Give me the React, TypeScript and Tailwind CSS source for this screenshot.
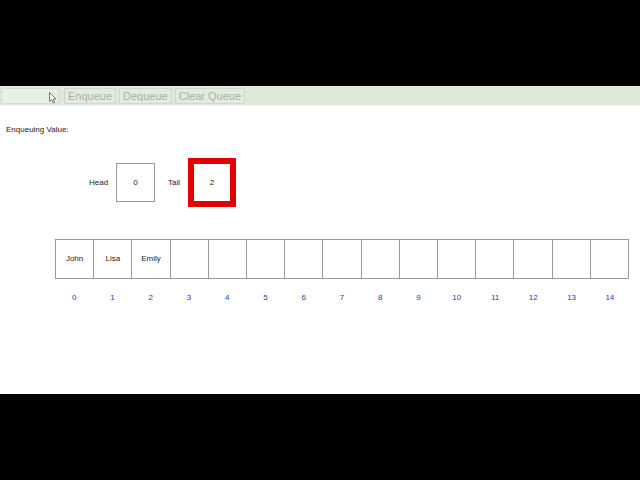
import React from "react";

const names = ["John", "Lisa", "Emily"];

export default function App() {
  const cells = Array.from({ length: 15 }, (_, i) => i);
  return (
    <div className="w-[640px] h-[480px] bg-black flex flex-col overflow-hidden" style={{ fontFamily: '"Liberation Sans", Arial, sans-serif' }}>
      <div className="h-[86px] shrink-0 bg-black" />
      <div className="h-[308px] shrink-0 bg-white flex flex-col">
        <div className="h-[20px] bg-[#dfe9d9] flex items-center pl-[1px] gap-[3px] border-b border-[#eef3eb]">
          <div className="w-[58px] h-[16px] bg-[#e9f0e6] border border-[#d3dccf] relative mr-[2px]">
            <svg className="absolute left-[47px] top-[3px]" width="8" height="12" viewBox="0 0 8 12">
              <path d="M0.5 0.5 L0.5 9.5 L2.8 7.6 L4.3 11 L5.6 10.4 L4.2 7.1 L7 7 Z" fill="white" stroke="#555" strokeWidth="0.8" />
            </svg>
          </div>
          <div className="h-[16px] px-[3px] border border-[#cfd8cb] bg-[#e3ebdf] text-[11px] leading-[14px] text-[#a9b0a6]">Enqueue</div>
          <div className="h-[16px] px-[3px] border border-[#cfd8cb] bg-[#e3ebdf] text-[11px] leading-[14px] text-[#a9b0a6]">Dequeue</div>
          <div className="h-[16px] px-[3px] border border-[#cfd8cb] bg-[#e3ebdf] text-[11px] leading-[14px] text-[#a9b0a6]">Clear Queue</div>
        </div>
        <div className="pl-[6px] pt-[19px] text-[8px] leading-[10px] text-[#222]">Enqueuing Value:</div>
        <div className="flex items-center mt-[23px] pl-[89px] h-[49px]">
          <span className="text-[8px] text-[#222] w-[27px]">Head</span>
          <div className="w-[39px] h-[39px] border border-[#999] flex items-center justify-center text-[8px] text-[#222]">0</div>
          <span className="text-[8px] text-[#222] ml-[13px] w-[20px]">Tail</span>
          <div className="w-[48px] h-[49px] border-[6px] border-[#e00000] flex items-center justify-center text-[8px] text-[#222]">2</div>
        </div>
        <div className="ml-[55px] mt-[32px] w-[574px] grid grid-cols-15 border-l border-[#999]">
          {cells.map((i) => (
            <div key={i} className="h-[40px] border-t border-b border-r border-[#999] flex items-center justify-center text-[8px] text-[#222]">
              {names[i] ?? ""}
            </div>
          ))}
        </div>
        <div className="ml-[55px] mt-[13px] w-[574px] grid grid-cols-15">
          {cells.map((i) => (
            <div key={i} className="text-center text-[8px] text-[#3333bb]">{i}</div>
          ))}
        </div>
      </div>
      <div className="flex-1 bg-black" />
    </div>
  );
}
